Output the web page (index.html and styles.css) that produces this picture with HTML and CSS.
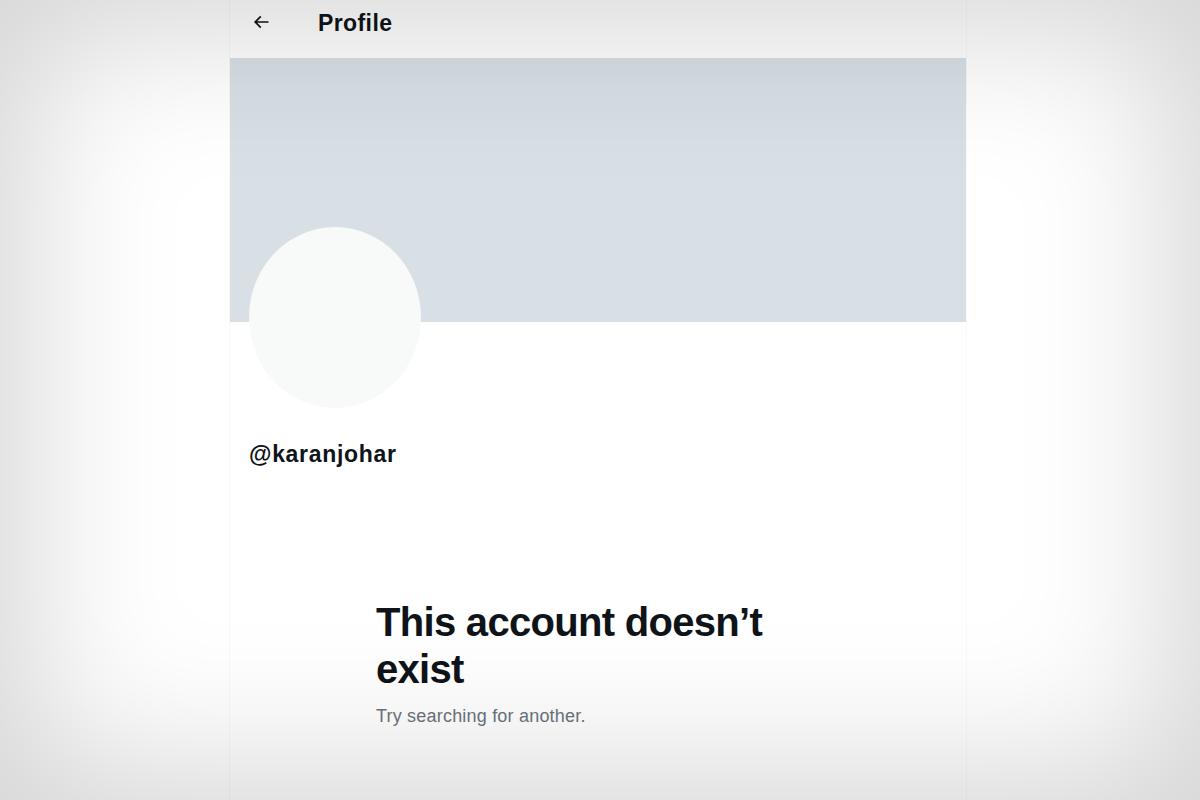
FILE: index.html
```html
<!DOCTYPE html>
<html lang="en">
<head>
<meta charset="utf-8">
<title>Profile</title>
<link rel="stylesheet" href="styles.css">
</head>
<body>
<div class="page">
  <main class="column">
    <header class="topbar">
      <span class="back">
        <svg width="20" height="20" viewBox="0 0 24 24" aria-hidden="true"><path d="M7.414 13l5.043 5.04-1.414 1.42L3.586 12l7.457-7.46 1.414 1.42L7.414 11H21v2H7.414z" fill="#0f1419"/></svg>
      </span>
      <h1 class="title">Profile</h1>
    </header>
    <div class="banner"></div>
    <div class="profile">
      <div class="avatar"></div>
      <div class="handle">@karanjohar</div>
    </div>
    <section class="empty">
      <h2 class="empty-title">This account doesn’t exist</h2>
      <p class="empty-sub">Try searching for another.</p>
    </section>
  </main>
</div>
<div class="vignette"></div>
</body>
</html>
```

FILE: styles.css
```css
html, body {
  margin: 0;
  padding: 0;
  background: #ffffff;
  height: 100%;
  overflow: hidden;
}
body {
  font-family: "Liberation Sans", Arial, sans-serif;
  color: #0f1419;
}
.page {
  padding-left: 229px;
}
.column {
  width: 738px;
  min-height: 800px;
  border-left: 1px solid #f7f8f9;
  border-right: 1px solid #f7f8f9;
  box-sizing: border-box;
}
.topbar {
  height: 58px;
  display: flex;
  align-items: center;
  padding-left: 21px;
  box-sizing: border-box;
  padding-bottom: 12px;
}
.back {
  display: flex;
  width: 20px;
  height: 20px;
  margin-top: -2px;
}
.title {
  margin: 0 0 0 47px;
  font-size: 23px;
  font-weight: 700;
  letter-spacing: 0.4px;
}
.banner {
  height: 264px;
  background: #d8e0e6;
}
.profile {
  padding-left: 19px;
}
.avatar {
  width: 172px;
  height: 181px;
  border-radius: 50%;
  background: #f8f9f9;
  margin-top: -95px;
}
.handle {
  margin-top: 32px;
  font-size: 23px;
  font-weight: 700;
  letter-spacing: 0.7px;
  line-height: 28px;
}
.empty {
  padding-left: 146px;
  margin-top: 131px;
  width: 420px;
}
.empty-title {
  margin: 0;
  font-size: 40px;
  line-height: 47px;
  font-weight: 700;
  letter-spacing: -0.7px;
}
.empty-sub {
  margin: 12px 0 0;
  font-size: 18px;
  line-height: 22px;
  letter-spacing: 0.2px;
  color: #6b737b;
}
.vignette {
  position: fixed;
  inset: 0;
  pointer-events: none;
  box-shadow: inset 0 0 150px 30px rgba(0, 0, 0, 0.17);
}
```
